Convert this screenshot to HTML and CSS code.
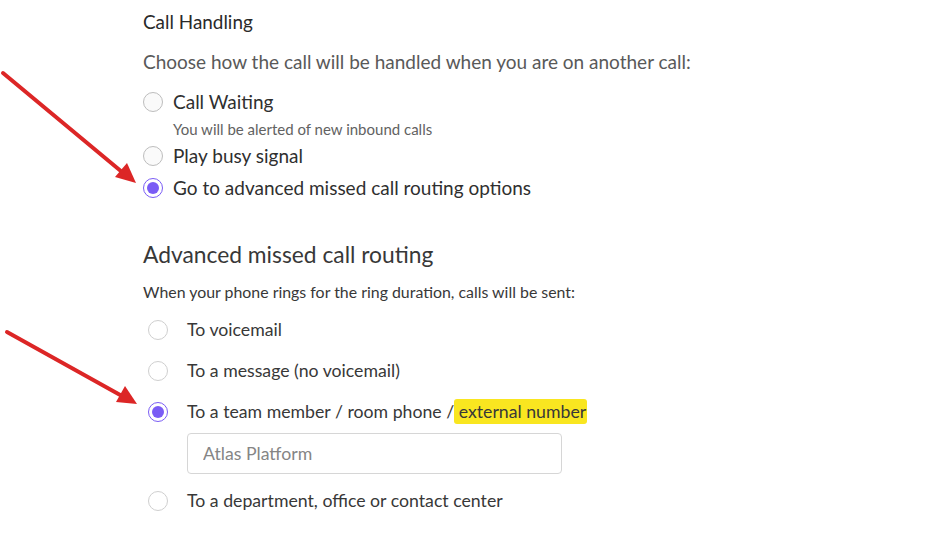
FILE: index.html
```html
<!DOCTYPE html>
<html lang="en">
<head>
    <meta charset="UTF-8">
    <meta name="viewport" content="width=device-width, initial-scale=1.0">
    <title>Call Handling</title>
    <link rel="stylesheet" href="styles.css">
</head>
<body>
    <!-- Стрелки-пометки поверх формы -->
    <svg class="marks" width="946" height="545" viewBox="0 0 946 545">
        <line x1="3" y1="73" x2="122" y2="172" stroke="#dc2626" stroke-width="4" stroke-linecap="round"/>
        <polygon points="136,183 115,177 127,163" fill="#dc2626"/>
        <line x1="7" y1="332" x2="122" y2="396" stroke="#dc2626" stroke-width="4" stroke-linecap="round"/>
        <polygon points="137,404 116,402 125,386" fill="#dc2626"/>
    </svg>

    <div class="page">
        <!-- Обработка звонков -->
        <section class="handling">
            <h2 class="title">Call Handling</h2>
            <p class="lead">Choose how the call will be handled when you are on another call:</p>

            <label class="option option-first">
                <input type="radio" name="busy" class="radio">
                <span>Call Waiting</span>
            </label>
            <p class="hint">You will be alerted of new inbound calls</p>
            <label class="option option-busy">
                <input type="radio" name="busy" class="radio">
                <span>Play busy signal</span>
            </label>
            <label class="option option-adv">
                <input type="radio" name="busy" class="radio" checked>
                <span>Go to advanced missed call routing options</span>
            </label>
        </section>

        <!-- Маршрутизация пропущенных -->
        <section class="routing">
            <h2 class="routing-title">Advanced missed call routing</h2>
            <p class="routing-lead">When your phone rings for the ring duration, calls will be sent:</p>

            <label class="route">
                <input type="radio" name="route" class="radio">
                <span>To voicemail</span>
            </label>
            <label class="route">
                <input type="radio" name="route" class="radio">
                <span>To a message (no voicemail)</span>
            </label>
            <label class="route">
                <input type="radio" name="route" class="radio" checked>
                <span>To a team member / room phone /<mark class="hl"> external number</mark></span>
            </label>
            <input type="text" class="target" placeholder="Atlas Platform">
            <label class="route route-last">
                <input type="radio" name="route" class="radio">
                <span>To a department, office or contact center</span>
            </label>
        </section>
    </div>
</body>
</html>
```

FILE: styles.css
```css
* {
    margin: 0;
    padding: 0;
    box-sizing: border-box;
}

body {
    font-family: Lato, "Open Sans", sans-serif;
    background: #ffffff;
    color: #333333;
    width: 946px;
    height: 545px;
    overflow: hidden;
    position: relative;
}

/* Стрелки */
.marks {
    position: absolute;
    top: 0;
    left: 0;
    pointer-events: none;
    z-index: 10;
}

.page {
    display: flex;
    flex-direction: column;
    padding: 10px 0 0 143px;
}

.handling,
.routing {
    display: flex;
    flex-direction: column;
    align-items: flex-start;
}

.title {
    font-size: 18.9px;
    font-weight: normal;
    line-height: 24px;
    color: #2a2a2a;
}

.lead {
    margin-top: 16px;
    font-size: 19px;
    line-height: 24px;
    color: #595959;
}

/* Радио-кнопки */
.radio {
    appearance: none;
    -webkit-appearance: none;
    width: 20px;
    height: 20px;
    border-radius: 50%;
    border: 1px solid #bdbdbd;
    background: #fafafa;
    display: flex;
    align-items: center;
    justify-content: center;
    flex-shrink: 0;
    margin: 0;
}

.radio:checked {
    border: 1.5px solid #7a5cf5;
    background: #ffffff;
}

.radio:checked::after {
    content: "";
    width: 12px;
    height: 12px;
    border-radius: 50%;
    background: #7a5cf5;
}

.option {
    display: flex;
    align-items: center;
    gap: 10px;
    font-size: 19px;
    line-height: 24px;
    color: #2f2f2f;
}

.option-first {
    margin-top: 16px;
}

.hint {
    margin: 5px 0 0 30px;
    font-size: 15px;
    line-height: 20px;
    color: #626262;
}

.option-busy {
    margin-top: 5px;
}

.option-adv {
    margin-top: 8px;
}

.routing {
    margin-top: 39px;
}

.routing-title {
    font-size: 22.8px;
    font-weight: normal;
    line-height: 30px;
    color: #383838;
}

.routing-lead {
    margin-top: 13px;
    font-size: 15.9px;
    line-height: 20px;
    color: #383838;
}

.route {
    display: flex;
    align-items: center;
    gap: 19px;
    padding-left: 5px;
    margin-top: 16px;
    font-size: 17.7px;
    line-height: 24px;
    color: #383838;
}

.route + .route {
    margin-top: 17px;
}

.route .radio:not(:checked) {
    border-color: #cfcfcf;
    background: #ffffff;
}

.hl {
    background: #f9e620;
    color: #383838;
    border-radius: 3px;
    padding: 2px 1px 2px 0;
}

.target {
    margin: 9px 0 0 44px;
    width: 375px;
    height: 41px;
    border: 1px solid #d6d6d6;
    border-radius: 4px;
    padding: 0 15px;
    font-family: inherit;
    font-size: 17.7px;
    color: #383838;
    background: #ffffff;
    outline: none;
}

.target::placeholder {
    color: #858585;
}

.route-last {
    margin-top: 15px;
}
```
